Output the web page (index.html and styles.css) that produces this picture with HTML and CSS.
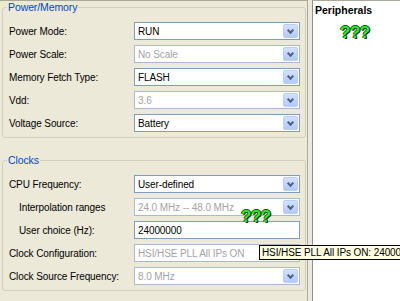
FILE: index.html
```html
<!DOCTYPE html>
<html lang="en">
<head>
    <meta charset="UTF-8">
    <title>Clock configuration</title>
    <link rel="stylesheet" href="styles.css">
</head>
<body>

    <div class="window">
        <div class="settings">

            <fieldset class="group">
                <legend>Power/Memory</legend>
                <div class="row">
                    <label>Power Mode:</label>
                    <div class="combo"><span>RUN</span><i class="drop"></i></div>
                </div>
                <div class="row">
                    <label>Power Scale:</label>
                    <div class="combo disabled"><span>No Scale</span><i class="drop"></i></div>
                </div>
                <div class="row">
                    <label>Memory Fetch Type:</label>
                    <div class="combo"><span>FLASH</span><i class="drop"></i></div>
                </div>
                <div class="row">
                    <label>Vdd:</label>
                    <div class="combo disabled"><span>3.6</span><i class="drop"></i></div>
                </div>
                <div class="row">
                    <label>Voltage Source:</label>
                    <div class="combo"><span>Battery</span><i class="drop"></i></div>
                </div>
            </fieldset>

            <fieldset class="group clocks">
                <legend>Clocks</legend>
                <div class="row">
                    <label>CPU Frequency:</label>
                    <div class="combo"><span>User-defined</span><i class="drop"></i></div>
                </div>
                <div class="row">
                    <label class="sub">Interpolation ranges</label>
                    <div class="combo disabled"><span>24.0 MHz -- 48.0 MHz</span><i class="drop"></i></div>
                </div>
                <div class="row">
                    <label class="sub">User choice (Hz):</label>
                    <div class="combo"><span>24000000</span></div>
                </div>
                <div class="row">
                    <label>Clock Configuration:</label>
                    <div class="combo disabled"><span>HSI/HSE PLL All IPs ON</span><i class="drop"></i></div>
                </div>
                <div class="row">
                    <label>Clock Source Frequency:</label>
                    <div class="combo disabled"><span>8.0 MHz</span><i class="drop"></i></div>
                </div>

                <!-- marqueur "inconnu" posé sur le champ -->
                <div class="unknown clocks-mark">???</div>
                <div class="tooltip">HSI/HSE PLL All IPs ON: 2400000</div>
            </fieldset>

        </div>
        <div class="splitter"></div>
        <div class="peripherals">
            <h2>Peripherals</h2>
            <div class="unknown">???</div>
        </div>
    </div>

</body>
</html>
```

FILE: styles.css
```css
body {
    margin: 0;
    padding: 0;
    font-family: 'Liberation Sans', Arial, sans-serif;
    font-size: 10px;
    letter-spacing: -0.1px;
    color: #000000;
    background-color: #ECE9D8;
}

.window {
    display: flex;
    width: 400px;
    height: 301px;
    overflow: hidden;
}

.settings {
    width: 308px;
    flex-shrink: 0;
    border-top: 1px solid #ACA899;
    border-right: 1px solid #ACA899;
    background-color: #ECE9D8;
    box-sizing: border-box;
    padding: 0 2px 0 2px;
}

.splitter {
    width: 4px;
    flex-shrink: 0;
    background-color: #ECE9D8;
}

.peripherals {
    flex: 1;
    background-color: #FFFFFF;
    border-left: 1px solid #8E8F8F;
    border-top: 1px solid #ACA899;
    padding: 2px 0 0 2px;
}

.peripherals h2 {
    margin: 0;
    font-size: 10.5px;
    font-weight: bold;
    letter-spacing: 0;
    line-height: 14px;
}

.peripherals .unknown {
    margin: 8px 0 0 25px;
}

/* group boxes */
.group {
    position: relative;
    margin: 0;
    padding: 8px 5px 5px 5px;
    border: 1px solid #D0D0BF;
    border-radius: 3px;
    display: flex;
    flex-direction: column;
    gap: 5px;
}

.group legend {
    color: #0046D5;
    padding: 0 1px;
    margin-left: -1px;
    line-height: 13px;
    font-size: 10.5px;
}

.clocks {
    margin-top: 16px;
}

.row {
    display: grid;
    grid-template-columns: 126px 166px;
    align-items: center;
    height: 18px;
}

.row label {
    padding-left: 1px;
}

.row label.sub {
    padding-left: 11px;
}

/* combos */
.combo {
    display: flex;
    align-items: center;
    justify-content: space-between;
    height: 18px;
    box-sizing: border-box;
    border: 1px solid #7F9DB9;
    background-color: #FFFFFF;
    padding: 0 1px 0 3px;
}

.combo.disabled {
    border-color: #A7B9D3;
    color: #A3A3A3;
}

.drop {
    width: 15px;
    height: 14px;
    box-sizing: border-box;
    border: 1px solid #B9CEF8;
    border-radius: 2px;
    background: linear-gradient(#D4E1FD, #B4C9F9) no-repeat;
    background-color: #C1D3FB;
    position: relative;
}

.drop::after {
    content: "";
    position: absolute;
    left: 4px;
    top: 3px;
    width: 3px;
    height: 3px;
    border-right: 2px solid #4D6185;
    border-bottom: 2px solid #4D6185;
    transform: rotate(45deg);
}

/* green question marks */
.unknown {
    font-family: 'Liberation Sans', Arial, sans-serif;
    font-size: 17px;
    font-weight: bold;
    letter-spacing: -0.5px;
    color: #22EE22;
    line-height: 16px;
    text-shadow: 1px 1px 0 #1A2E1A, -1px 0 0 #2A402A, 0 -1px 0 #2A402A, 1px 0 0 #2A402A;
}

.clocks-mark {
    position: absolute;
    left: 238px;
    top: 42px;
}

.tooltip {
    position: absolute;
    left: 256px;
    top: 78px;
    height: 15px;
    white-space: nowrap;
    box-sizing: border-box;
    padding: 0 2px;
    line-height: 13px;
    background-color: #FFFFE1;
    border: 1px solid #000000;
}
```
